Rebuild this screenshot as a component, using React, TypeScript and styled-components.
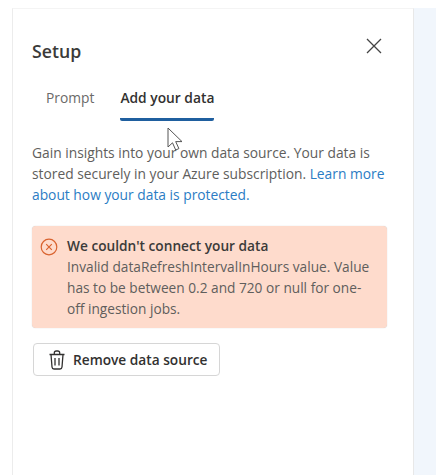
import React from 'react';
import styled, { createGlobalStyle } from 'styled-components';

const Global = createGlobalStyle`
  html, body {
    margin: 0;
    height: 100%;
    background: #fff;
  }
  body {
    font-family: "Open Sans", "Noto Sans", sans-serif;
    overflow: hidden;
  }
`;

const Page = styled.div`
  width: 436px;
  height: 475px;
  box-sizing: border-box;
  padding: 8px 0 0 12px;
  display: flex;
  background: #fff;
  overflow: hidden;
`;

const Panel = styled.section`
  position: relative;
  width: 402px;
  box-sizing: border-box;
  padding: 30px 26px 0 19px;
  border-left: 1px solid #ececec;
  border-top: 1px solid #f4f4f4;
  border-right: 1px solid #e8e8e8;
`;

const Side = styled.div`
  flex: 1;
  background: #f1f6fc;
`;

const Header = styled.header`
  display: flex;
  justify-content: space-between;
  align-items: flex-start;
`;

const Title = styled.h2`
  margin: 0;
  font-size: 17.7px;
  line-height: 24px;
  font-weight: 600;
  color: #3b3a39;
`;

const Close = styled.button`
  border: 0;
  padding: 0;
  background: none;
  width: 16px;
  height: 16px;
  margin: -1px 5px 0 0;
  color: #444;
  display: flex;
`;

const Tabs = styled.div`
  display: flex;
  gap: 26px;
  padding: 0 0 0 14px;
  margin-top: 25px;
`;

const Tab = styled.div<{ $active?: boolean }>`
  font-size: 13.8px;
  line-height: 20px;
  height: 30px;
  font-weight: ${(p) => (p.$active ? 600 : 400)};
  color: ${(p) => (p.$active ? '#323130' : '#6b6a69')};
  border-bottom: 3px solid ${(p) => (p.$active ? '#1f5f9f' : 'transparent')};
  border-radius: 0 0 2px 2px;
`;

const Intro = styled.p`
  margin: 21px 0 0;
  font-size: 13.8px;
  line-height: 21px;
  color: #605e5c;
`;

const LearnMore = styled.a`
  color: #2b7cc4;
  text-decoration: none;
`;

const Alert = styled.div`
  display: flex;
  gap: 9px;
  margin-top: 21px;
  padding: 9px 12px 9px 8px;
  background: #fedbcc;
  border-radius: 4px;
  box-shadow: 0 0 1px rgba(0, 0, 0, 0.25);
`;

const AlertIcon = styled.svg`
  flex: none;
  width: 18px;
  height: 18px;
  margin-top: 3px;
  color: #d9632f;
`;

const AlertBody = styled.div`
  font-size: 13.7px;
  line-height: 21px;
  color: #605e5c;
`;

const AlertTitle = styled.div`
  font-weight: 600;
  color: #3b3a39;
`;

const RemoveButton = styled.button`
  display: inline-flex;
  align-items: center;
  gap: 7px;
  margin: 15px 0 0 1px;
  height: 33px;
  padding: 0 12px 0 14px;
  font-family: inherit;
  font-size: 13.7px;
  font-weight: 600;
  color: #323130;
  background: #fff;
  border: 1px solid #d6d6d6;
  border-radius: 4px;
`;

const Cursor = styled.svg`
  position: absolute;
  left: 154px;
  top: 118px;
  width: 18px;
  height: 26px;
`;

export default function App() {
  return (
    <>
      <Global />
      <Page>
        <Panel>
          <Header>
            <Title>Setup</Title>
            <Close aria-label="Close">
              <svg width="16" height="16" viewBox="0 0 16 16" fill="none" stroke="currentColor" strokeWidth="1.3">
                <path d="M1 1l14 14M15 1L1 15" />
              </svg>
            </Close>
          </Header>
          <Tabs>
            <Tab>Prompt</Tab>
            <Tab $active>Add your data</Tab>
          </Tabs>
          <Intro>
            Gain insights into your own data source. Your data is stored securely in your Azure subscription.{' '}
            <LearnMore href="#">Learn more about how your data is protected.</LearnMore>
          </Intro>
          <Alert>
            <AlertIcon viewBox="0 0 18 18" fill="none" stroke="currentColor" strokeWidth="1.2">
              <circle cx="9" cy="9" r="7.8" />
              <path d="M6.2 6.2l5.6 5.6M11.8 6.2l-5.6 5.6" />
            </AlertIcon>
            <AlertBody>
              <AlertTitle>We couldn't connect your data</AlertTitle>
              Invalid dataRefreshIntervalInHours value. Value has to be between 0.2 and 720 or null for one-off ingestion jobs.
            </AlertBody>
          </Alert>
          <RemoveButton>
            <svg width="18" height="20" viewBox="0 0 18 20" fill="none" stroke="#323130" strokeWidth="1.3">
              <path d="M1.5 4.5h15M3 4.5l1 12.5c.1 1.2.9 2 2 2h6c1.100 0 1.900-.8 2-2l1-12.500M6.300 4.500V3c0-1.100.9-2 2-2h1.400c1.100 0 2 .9 2 2v1.500M7 8v7.500M11 8v7.500" />
            </svg>
            Remove data source
          </RemoveButton>
          <Cursor viewBox="0 0 18 26">
            <path d="M1 1v19l4.500-4.200 3.200 7.200 3.200-1.400-3.200-7h6.300z" fill="#fff" stroke="#555" strokeWidth="1" />
          </Cursor>
        </Panel>
        <Side />
      </Page>
    </>
  );
}
